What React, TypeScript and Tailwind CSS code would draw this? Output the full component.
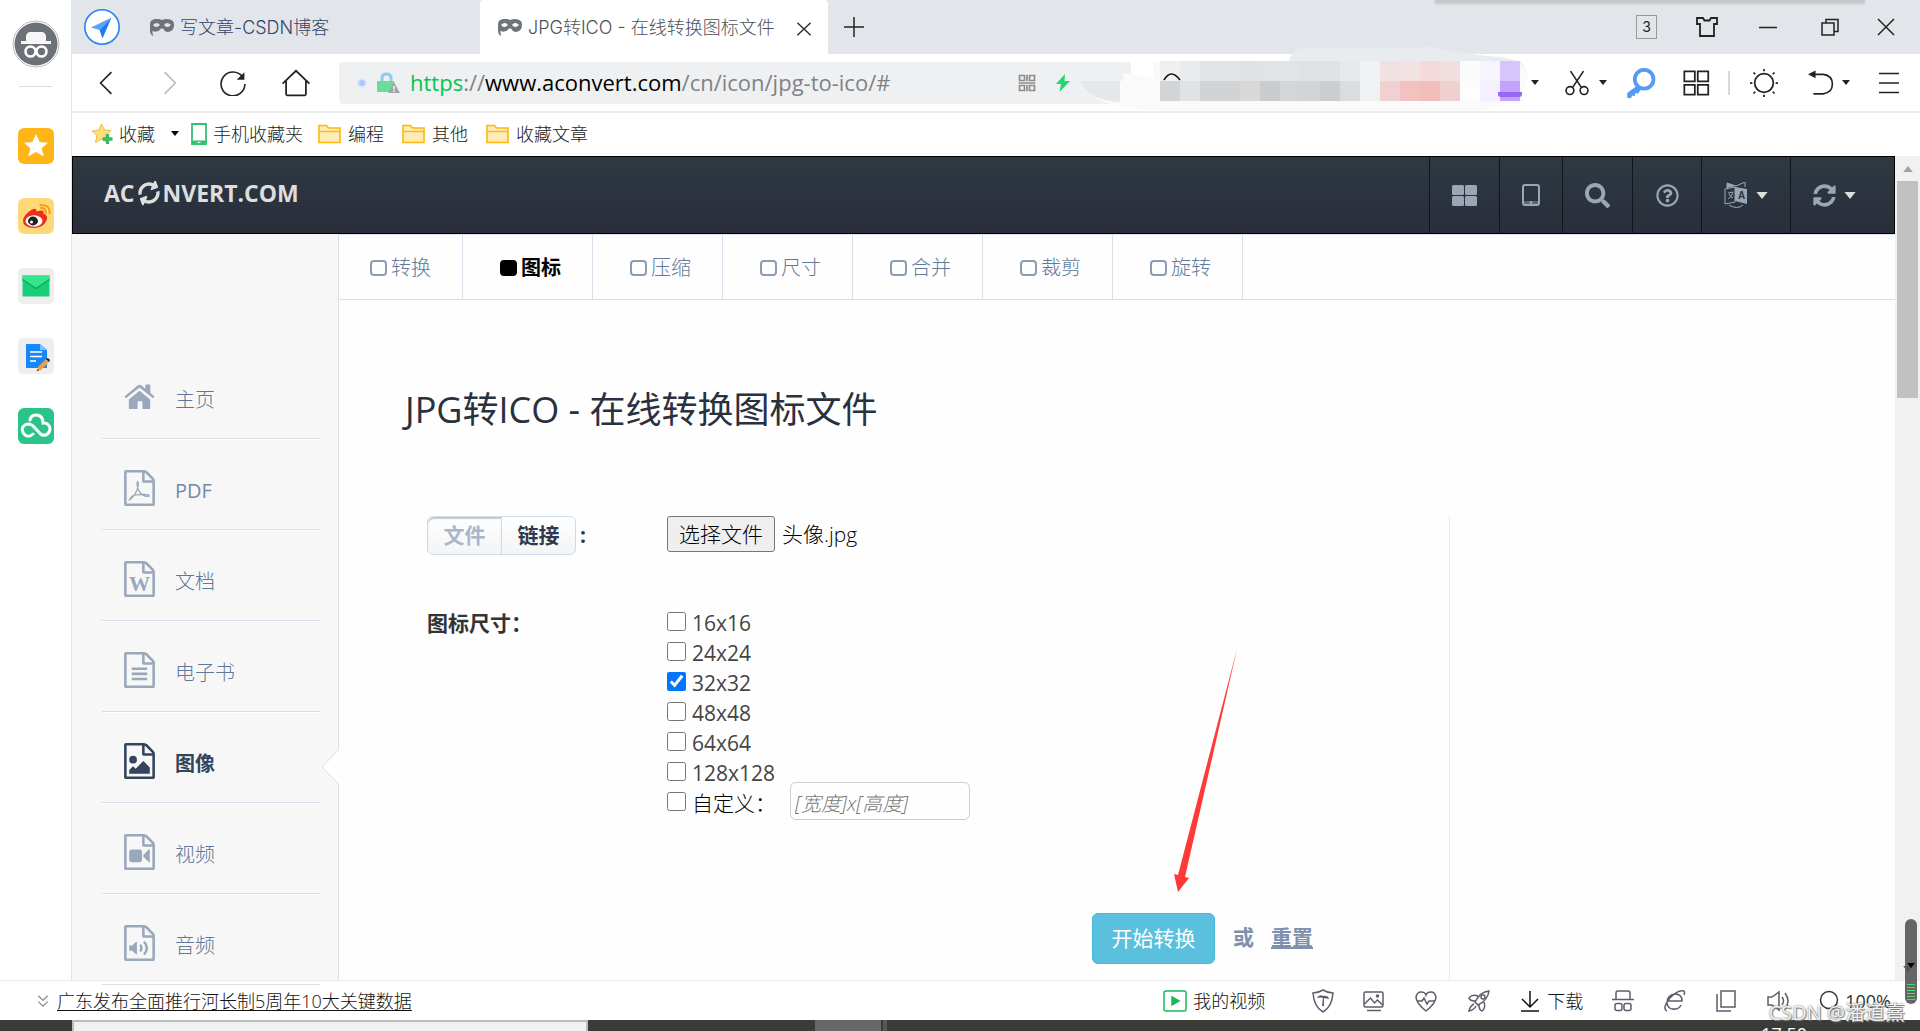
import { ReactNode } from "react";

import { FaRegQuestionCircle, FaSearch, FaSyncAlt } from "react-icons/fa";

import { twMerge } from "tailwind-merge";

interface IIconProps {
  className?: string;
}

interface IStrokeIconProps extends IIconProps {
  children: ReactNode;
  size?: number;
}

function StrokeIcon({ children, className, size = 24 }: IStrokeIconProps) {
  return (
    <svg
      className={twMerge("shrink-0", className)}
      fill="none"
      height={size}
      stroke="currentColor"
      strokeWidth={1.5}
      viewBox="0 0 24 24"
      width={size}
    >
      {children}
    </svg>
  );
}

function Caret({ className }: IIconProps) {
  return (
    <svg
      className={twMerge("h-[5px] w-2 shrink-0", className)}
      fill="currentColor"
      viewBox="0 0 8 5"
    >
      <path d="M0 0h8L4 5z" />
    </svg>
  );
}

function MaskIcon() {
  return (
    <svg className="h-[18px] w-6 shrink-0" fill="#6f737a" viewBox="0 0 24 18">
      <path
        d="M0 5q0-4 5-5 4-.6 7 1 4-1.600 8-.6 4 1 4 5 0 7-6 7.500-3 0-5-3.500h-2q-2 3-5 3.200-2 .3-3.400-.8-.6 2 .8 5.200Q0 16 0 11zM3 6q3 4 7 0-3-4-7 0zm11 0q3 4 7 0-4-4-7 0z"
        fillRule="evenodd"
      />
    </svg>
  );
}

function FolderIcon() {
  return (
    <svg className="h-5 w-[23px] shrink-0" viewBox="0 0 23 20">
      <path
        d="M1 18.500V1.500h7.500l2 2.500H22v14.500z"
        fill="#ffebb5"
        stroke="#fcb90f"
        strokeWidth="1.600"
      />
      <path d="M1 7.500h21" stroke="#fcb90f" strokeWidth="1.400" />
    </svg>
  );
}

function HomeGlyph() {
  return (
    <svg className="h-[26px] w-8" fill="currentColor" viewBox="0 0 32 26">
      <path d="M16 6.500 27 15.500V24.500q0 1-1 1h-7v-8h-5v8H6q-1 0-1-1v-9z" />
      <path d="M14 1q2-1.500 4 0l4 3.400V1q0-.8.800-.8h3.600q.8 0 .8.800v7.600L31.500 12.500 30 14.400 16 3.200 2 14.400.500 12.500z" />
    </svg>
  );
}

function FileGlyph({ children }: { children: ReactNode }) {
  return (
    <svg
      className="h-9 w-[31px]"
      fill="currentColor"
      viewBox="0 0 1536 1792"
    >
      <path d="M1468 380q28 28 48 76t20 88v1152q0 40-28 68t-68 28H96q-40 0-68-28t-28-68V96q0-40 28-68T96 0h896q40 0 88 20t76 48zm-444-244v376h376q-10-29-22-41l-313-313q-12-12-41-22zm384 1528V640H992q-40 0-68-28t-28-68V128H128v1536z" />
      {children}
    </svg>
  );
}

const sideItems = [
  { label: "主页", icon: <HomeGlyph /> },
  {
    label: "PDF",
    icon: (
      <FileGlyph>
        <path
          d="M270 1490q40-140 250-240 150-270 190-500 0-180-40-170-70 60 20 340 90 250 240 330 200 100 310 50 40-60-130-80-300-10-590 30-180 190-250 240z"
          fill="none"
          stroke="currentColor"
          strokeWidth="62"
        />
      </FileGlyph>
    ),
  },
  {
    label: "文档",
    icon: (
      <FileGlyph>
        <text
          fontFamily="Liberation Serif, serif"
          fontSize="1050"
          fontWeight="700"
          textAnchor="middle"
          x="768"
          y="1480"
        >
          W
        </text>
      </FileGlyph>
    ),
  },
  {
    label: "电子书",
    icon: (
      <FileGlyph>
        <path d="M384 768h768v128H384zM384 1024h768v128H384zM384 1280h768v128H384z" />
      </FileGlyph>
    ),
  },
  {
    active: true,
    label: "图像",
    icon: (
      <FileGlyph>
        <path d="M1280 1216v320H256v-192l192-192 128 128 384-384z" />
        <circle cx="448" cy="832" r="192" />
      </FileGlyph>
    ),
  },
  {
    label: "视频",
    icon: (
      <FileGlyph>
        <path d="M768 768q52 0 90 38t38 90v384q0 52-38 90t-90 38H384q-52 0-90-38t-38-90V896q0-52 38-90t90-38zM1280 800v576q0 22-20 30-20 6-35-7l-265-266v-90l265-266q15-13 35-7 20 8 20 30z" />
      </FileGlyph>
    ),
  },
  {
    label: "音频",
    icon: (
      <FileGlyph>
        <path d="M640 864v576q0 40-50 20l-180-176H256v-264h154l180-176q50-20 50 20z" />
        <path
          d="M800 980q130 170 0 340M990 830q290 320 0 640"
          fill="none"
          stroke="currentColor"
          strokeWidth="120"
        />
      </FileGlyph>
    ),
  },
];

const tools = ["转换", "图标", "压缩", "尺寸", "合并", "裁剪", "旋转"];

const sizes = ["16x16", "24x24", "32x32", "48x48", "64x64", "128x128"];

// One row of swatches per line of the blurred search box
const mosaic = [
  [
    "#eff0f2", "#e9ebed", "#e2e3e5", "#e2e3e5", "#e1e2e4", "#e2e3e4",
    "#e2e3e5", "#e0e1e3", "#e1e2e4", "#e7e8ea", "#f0f2f5", "#f2e1e2",
    "#f2e3e3", "#f4dadb", "#f2dedf", "#fbfbfc", "#f6f4fe", "#d6c4fd",
  ],
  [
    "#d3d4d6", "#e1e2e4", "#d2d3d5", "#d2d3d5", "#d8d8d9", "#cbcccf",
    "#d4d5d7", "#d3d4d6", "#cccdcf", "#dadce0", "#eff1f4", "#f0d0d0",
    "#f3c1bf", "#f3bdbb", "#f0d0cf", "#fdfdfd", "#f4f0ff", "#c1a3fb",
  ],
];

function AppRail() {
  return (
    <aside className="flex w-[72px] shrink-0 flex-col items-center border-r border-[#e1e2e4] bg-white pt-5">
      <button aria-label="账号" className="size-12">
        <svg viewBox="0 0 48 48">
          <circle cx="24" cy="24" fill="#fff" r="23" stroke="#b9bbbf" />
          <circle cx="24" cy="24" fill="#6c7178" r="21.500" />
          <path
            d="M14 21v-5q1-4 4-4h12q3 0 4 4v5h5v3H9v-3z"
            fill="#f6f6f6"
          />
          <g fill="none" stroke="#fff" strokeWidth="2.600">
            <circle cx="18.500" cy="31.500" r="5" />
            <circle cx="29.500" cy="31.500" r="5" />
          </g>
        </svg>
      </button>
      <hr className="mt-[18px] w-[33px] border-[#dcdde0]" />
      <nav className="mt-[41px] flex flex-col gap-[34px]">
        <button aria-label="收藏" className="size-9">
          <svg viewBox="0 0 36 36">
            <rect fill="#ffb516" height="36" rx="6" width="36" />
            <path
              d="m18 6 3.700 8 8.300.700-6.400 5.600 2.200 8.200L18 24l-7.800 4.500 2.200-8.200L6 14.700l8.300-.7z"
              fill="#fff"
            />
          </svg>
        </button>
        <button aria-label="微博" className="size-9">
          <svg viewBox="0 0 36 36">
            <rect fill="#ffd878" height="36" rx="6" width="36" />
            <path
              d="M5 23q0-6 9-11.500 5-2 4.500 2 8-3 7 2 5 2 3 7-3 7-12 7.500Q5 29.500 5 23z"
              fill="#e8301c"
            />
            <ellipse cx="16" cy="23" fill="#fff" rx="8.500" ry="5.800" />
            <ellipse cx="15" cy="23" fill="#222" rx="5" ry="4.400" />
            <circle cx="13.500" cy="24" fill="#fff" r="1.500" />
            <path
              d="M22 10q6-1 6 6M21.500 7q11-1 10 9"
              fill="none"
              stroke="#f6a01c"
              strokeWidth="2"
            />
          </svg>
        </button>
        <button aria-label="邮箱" className="size-9">
          <svg viewBox="0 0 36 36">
            <rect fill="#eee" height="36" rx="5" width="36" />
            <path d="M4.500 7.500h27v21h-27z" fill="#17cf78" />
            <path d="M4.500 7.500h27V12L18 20.500 4.500 12z" fill="#35e58b" />
            <path
              d="M4.500 11.500 18 20.500l13.500-9"
              fill="none"
              stroke="#0da45c"
              strokeWidth="1.200"
            />
          </svg>
        </button>
        <button aria-label="笔记" className="size-9">
          <svg viewBox="0 0 36 36">
            <rect fill="#eee" height="36" rx="5" width="36" />
            <path d="M8 6h14l7 6v18H8z" fill="#1687fb" />
            <path d="M22 6v6h7z" fill="#7cc0ff" />
            <path
              d="M12 14h12M12 18.500h12M12 23h6"
              stroke="#fff"
              strokeWidth="1.400"
            />
            <path d="m19 33 1-4 8-8 3 3-8 8z" fill="#f99c3a" />
            <path d="m28 21 2-1 2 2-1 2zM19 33l.5-2 1.500 1.500z" fill="#222" />
          </svg>
        </button>
        <button aria-label="网盘" className="size-9">
          <svg viewBox="0 0 36 36">
            <rect fill="#2ac48a" height="36" rx="6" width="36" />
            <path
              d="M15 26q-5 4.500-9 0-4-6 1-9 5-3 10 3l5 5.500q4 3.500 8 0 4-5 0-9-2-2-5-1.500 0-8-7-8-5 0-6 5"
              fill="none"
              stroke="#fff"
              strokeLinecap="round"
              strokeWidth="3"
            />
          </svg>
        </button>
      </nav>
    </aside>
  );
}

function TabStrip() {
  return (
    <header className="flex h-[54px] items-stretch bg-[#e2e5ea] font-['Inter','Noto_Sans_CJK_SC',sans-serif] text-lg font-light">
      <button aria-label="导航" className="ml-3 self-center">
        <svg className="size-9" viewBox="0 0 36 36">
          <circle cx="18" cy="18" fill="#fff" r="17.200" stroke="#2a80f5" strokeWidth="1.600" />
          <path d="M27.500 8.500 7 18.500l8.500 2.500z" fill="#57a5fb" />
          <path d="M27.500 8.500 15.500 21l3 8.500z" fill="#1d7cf2" />
        </svg>
      </button>
      <a
        className="ml-[30px] flex w-[330px] items-center gap-[6px] pt-[2px] text-[#2f456b]"
        href="#blog"
      >
        <MaskIcon />
        写文章-CSDN博客
      </a>
      <div className="flex w-[348px] items-center gap-[6px] rounded-t bg-white pt-[2px] pr-4 pl-[18px] text-[#4c5058]">
        <MaskIcon />
        <a className="flex-1 whitespace-nowrap" href="#icon">
          JPG转ICO - 在线转换图标文件
        </a>
        <button aria-label="关闭标签" className="text-[#333]">
          <StrokeIcon size={16}>
            <path d="m2 4 20 19M22 4 2 23" strokeWidth="2.200" />
          </StrokeIcon>
        </button>
      </div>
      <button aria-label="新标签" className="ml-[14px] text-[#222]">
        <StrokeIcon>
          <path d="M12 2v20M2 12h20" />
        </StrokeIcon>
      </button>
      <div className="relative flex flex-1 items-center justify-end pr-[22px] text-[#222]">
        <div className="absolute top-0 right-[55px] h-[3px] w-[430px] bg-[#c6c9cc] shadow" />
        <button className="h-6 w-[21px] border border-[#999] text-center text-sm font-normal">
          3
        </button>
        <button aria-label="皮肤" className="ml-[38px]">
          <StrokeIcon>
            <path d="M2 3h6l1.500 2.500h5L16 3h6v6h-3v12H5V9H2z" strokeWidth="1.800" />
          </StrokeIcon>
        </button>
        <button aria-label="最小化" className="ml-[37px]">
          <StrokeIcon>
            <path d="M3 12.500h18" />
          </StrokeIcon>
        </button>
        <button aria-label="还原" className="ml-[38px]">
          <StrokeIcon>
            <path d="M4 8h12v12H4zM8 8V4.500h12v12h-4" />
          </StrokeIcon>
        </button>
        <button aria-label="关闭" className="ml-8">
          <StrokeIcon>
            <path d="m4 4 16 16M20 4 4 20" />
          </StrokeIcon>
        </button>
      </div>
    </header>
  );
}

function SearchBlur() {
  return (
    <svg
      className="absolute -top-[15px] -left-[73px] h-[66px] w-[460px]"
      viewBox="1080 46 460 66"
    >
      <path
        d="M1289 60q4-13 16-13h110q20-3 32 3l40 5q36 2 38 12v16z"
        fill="#e8ecef"
      />
      <path d="M1080 80q8 30 100 30h300q45-6 48-35-3-17-25-15h-280l-60 18-40-6v8z" fill="#fafafb" />
      <path d="M1080 80h40v21q-34-2-40-21z" fill="#e6e7e9" />
      {mosaic.map((row, rowIndex) =>
        row.map((fill, index) => (
          <rect
            fill={fill}
            height="20"
            key={`${rowIndex}-${index}`}
            width="20"
            x={1160 + index * 20}
            y={60 + rowIndex * 20}
          />
        ))
      )}
      <path d="M1164 79q7-12 16 0" fill="none" stroke="#111" strokeWidth="1.500" />
      <path d="M1498 91h24v2q0 3-3 3h-18q-3 0-3-3z" fill="#9a66f8" />
    </svg>
  );
}

function Toolbar() {
  return (
    <div className="flex h-[59px] items-center border-b-2 border-[#ececed] bg-white pr-[19px] text-[#222]">
      <button aria-label="后退" className="ml-[21px]">
        <StrokeIcon size={26}>
          <path d="M17 2 7 12l10 10" />
        </StrokeIcon>
      </button>
      <button aria-label="前进" className="ml-[39px] text-[#bbb]">
        <StrokeIcon size={26}>
          <path d="m6 2 10 10L6 22" />
        </StrokeIcon>
      </button>
      <button aria-label="刷新" className="ml-9">
        <StrokeIcon size={26}>
          <path d="M21 6.500A11 11 0 1 0 23 13" />
          <path d="M22.500 2v7h-7z" fill="currentColor" stroke="none" />
        </StrokeIcon>
      </button>
      <button aria-label="主页" className="ml-9">
        <StrokeIcon size={28}>
          <path d="M.5 12.500 12 1.500l11.500 11M3.500 10v11.500q0 1 1 1h15q1 0 1-1V10" />
        </StrokeIcon>
      </button>
      <div className="ml-[29px] flex h-[42px] min-w-0 flex-1 items-center rounded bg-[#eff0f2] pl-4">
        <span className="ml-[2px] size-[10px] shrink-0 rounded-full border-2 border-[#dbe6fb] bg-[#a9c6fa]" />
        <svg className="ml-[9px] h-[22px] w-6 shrink-0" viewBox="0 0 24 22">
          <path d="M6 9V6q0-4 4.500-4T15 6v3" fill="none" stroke="#8ecbf2" strokeWidth="3" />
          <path d="M1 9h17v11H1z" fill="#67dd95" />
          <path d="m18 10 6 11H12z" fill="#a2a5a6" />
          <path d="M18 14v3.500m0 1v1.500" stroke="#fff" strokeWidth="1.400" />
        </svg>
        <a
          className="ml-[10px] text-[22px] whitespace-nowrap text-[#808285]"
          href="#url"
        >
          <span className="text-[#07c24f]">https</span>://
          <span className="text-black">www.aconvert.com</span>
          /cn/icon/jpg-to-ico/#
        </a>
        <button aria-label="二维码" className="ml-auto text-[#8c8c8c]">
          <StrokeIcon size={20}>
            <path d="M3 3h6v6H3zM15 3h6v6h-6zM3 15h6v6H3zM15 15h6v6h-6zM12 2v8M2 12h20M12 14v8" strokeWidth="2" />
          </StrokeIcon>
        </button>
        <button aria-label="极速模式" className="mr-[60px] ml-[18px]">
          <svg className="h-5 w-4" viewBox="0 0 16 20">
            <path d="M10 1 1 11h5l-1.500 8L15 8h-5.500z" fill="#20d872" />
          </svg>
        </button>
      </div>
      <div className="relative ml-[22px] h-[42px] w-[369px] shrink-0 rounded bg-[#eff0f2]/40">
        <SearchBlur />
      </div>
      <Caret className="ml-[9px]" />
      <button aria-label="截图" className="ml-[25px]">
        <StrokeIcon size={26}>
          <path d="m6 1 10 15M18 1 8 16" />
          <circle cx="5.500" cy="19" r="3.600" />
          <circle cx="18.500" cy="19" r="3.600" />
        </StrokeIcon>
      </button>
      <Caret className="ml-[9px]" />
      <button aria-label="密码" className="ml-[19px] text-[#5699f6]">
        <StrokeIcon size={30}>
          <circle cx="14.500" cy="9" r="7.500" strokeWidth="3" />
          <path d="m9 14-8 6v4h3l1-2 2 .500.500-2.500 2 .500 3-4z" fill="currentColor" stroke="none" />
        </StrokeIcon>
      </button>
      <button aria-label="扩展" className="ml-[26px]">
        <StrokeIcon size={28}>
          <path d="M2 2h9v8.500H2zM13.500 2h9v8.500h-9zM2 13.500h9V22H2zM13.500 13.500h9V22h-9z" />
        </StrokeIcon>
      </button>
      <span className="ml-[18px] h-6 w-[2px] bg-[#d9d9db]" />
      <button aria-label="亮度" className="ml-5">
        <StrokeIcon size={28}>
          <circle cx="12" cy="12" r="8" />
          <path d="M12 0v2M12 22v2M0 12h2M22 12h2M3 3l1.500 1.500M19.500 19.500 21 21M21 3l-1.500 1.500M4.500 19.500 3 21" />
        </StrokeIcon>
      </button>
      <button aria-label="撤销" className="ml-[30px]">
        <StrokeIcon size={26}>
          <path d="M5 4h9q8.500 1 8.500 9T14 22H5" />
          <path d="m0 4 7-3.500v7z" fill="currentColor" stroke="none" />
        </StrokeIcon>
      </button>
      <Caret className="ml-2" />
      <button aria-label="菜单" className="ml-[27px]">
        <StrokeIcon>
          <path d="M2 2.500h20M2 12h20M2 21.500h20" />
        </StrokeIcon>
      </button>
    </div>
  );
}

function BookmarkBar() {
  return (
    <nav className="flex h-[43px] items-center bg-white pb-[2px] pl-[19px] text-lg font-light text-[#222]">
      <a className="flex items-center gap-[6px]" href="#favorites">
        <svg className="size-[22px]" viewBox="0 0 22 22">
          <path
            d="m10.500 1 3 6 6.500.500-5 5 1 7-5.500-3.500-6 3.500 1.500-7L1 8l6.500-.500z"
            fill="#fee07a"
            stroke="#f5b93c"
          />
          <path d="M16.500 11v10M11.500 16h10" stroke="#3fb86c" strokeWidth="3.400" />
        </svg>
        收藏
      </a>
      <Caret className="ml-4 text-black" />
      <a className="ml-3 flex items-center gap-[6px]" href="#mobile">
        <svg className="h-[22px] w-4" viewBox="0 0 16 22">
          <path d="M1 1h14v20H1z" fill="#fff" stroke="#35bf71" strokeWidth="1.800" />
          <path d="M1 17.500h14V21H1z" fill="#35bf71" />
          <path d="M6.500 19.400h3" stroke="#fff" />
        </svg>
        手机收藏夹
      </a>
      <div className="ml-[15px] flex gap-[18px]">
        {["编程", "其他", "收藏文章"].map((label) => (
          <a
            className="flex items-center gap-[7px]"
            href="#folder"
            key={label}
          >
            <FolderIcon />
            {label}
          </a>
        ))}
      </div>
    </nav>
  );
}

function SiteHeader() {
  return (
    <header className="flex h-[78px] items-stretch justify-between border border-black bg-linear-to-b from-[#2e3942] to-[#292e3a] text-[#9ba6b5]">
      <a
        className="ml-[31px] flex items-center pb-1 text-[23px] font-bold text-[#dedede]"
        href="#home"
      >
        AC
        <FaSyncAlt className="mx-[3px] size-[22px] -rotate-[20deg]" />
        NVERT.COM
      </a>
      <nav className="flex">
        <button aria-label="应用" className="flex w-[70px] items-center justify-center border-l border-[#12161b]">
          <svg className="h-[21px] w-[25px]" fill="currentColor" viewBox="0 0 25 21">
            <rect height="10" rx="1.500" width="12" />
            <rect height="10" rx="1.500" width="12" x="13" />
            <rect height="10" rx="1.500" width="12" y="11" />
            <rect height="10" rx="1.500" width="12" x="13" y="11" />
          </svg>
        </button>
        <button aria-label="移动版" className="flex w-[63px] items-center justify-center border-l border-[#12161b]">
          <svg className="h-[22px] w-[18px]" viewBox="0 0 18 22">
            <rect fill="none" height="20" rx="2" stroke="currentColor" strokeWidth="2" width="16" x="1" y="1" />
            <path d="M2 17h14v3H2z" fill="currentColor" opacity=".45" />
            <circle cx="9" cy="18.500" fill="currentColor" r="1.400" />
          </svg>
        </button>
        <button aria-label="搜索" className="flex w-[70px] items-center justify-center border-l border-[#12161b]">
          <FaSearch size={25} />
        </button>
        <button aria-label="帮助" className="flex w-[69px] items-center justify-center border-l border-[#12161b]">
          <FaRegQuestionCircle size={23} />
        </button>
        <button aria-label="语言" className="flex w-[89px] items-center justify-center gap-2 border-l border-[#12161b]">
          <svg className="h-[26px] w-6" fill="currentColor" viewBox="0 0 24 26">
            <path d="m11 5 12 2v15l-12-3z" />
            <path d="M1 7l10-2v15L1 22zM3 1l9 3 9-4v5M3 1v5M5 23q8 5 14 0" fill="none" stroke="currentColor" />
            <path d="m3 1 9 3-9 2z" />
            <path d="M4 11l5-1q-1 5-5 7M5 12q2 4 4 4" fill="none" stroke="currentColor" />
            <text fill="#2b333d" fontFamily="Liberation Sans, sans-serif" fontSize="10" fontWeight="700" x="14" y="17">
              A
            </text>
          </svg>
          <Caret className="h-[7px] w-3 text-[#dedede]" />
        </button>
        <button aria-label="转换" className="flex w-[104px] items-center gap-2 border-l border-[#12161b] pl-[22px]">
          <FaSyncAlt size={23} />
          <Caret className="h-[7px] w-3 text-[#dedede]" />
        </button>
      </nav>
    </header>
  );
}

function Sidebar() {
  return (
    <aside className="w-[267px] shrink-0 border-r border-[#d6e1ea] bg-[#f7f7f7] px-[30px] pt-[114px]">
      <ul className="-mr-3">
        {sideItems.map(({ active, icon, label }) => (
          <li
            className="relative h-[91px] border-b border-[#d6e0ea] shadow-[0_1px_0_#fff]"
            key={label}
          >
            <a
              className={twMerge(
                "flex h-full items-center gap-5 pt-2 pl-[22px] text-xl font-light text-[#5f7798]",
                active && "font-bold text-[#32455c]",
                label === "PDF" && "font-normal text-[#7489a6]"
              )}
              href="#section"
            >
              <span
                className={twMerge(
                  "flex w-[31px] justify-center text-[#9aa8bb]",
                  active && "text-[#32455c]"
                )}
              >
                {icon}
              </span>
              <span className="pt-[6px]">{label}</span>
            </a>
            {active && (
              <svg
                className="absolute top-[38px] -right-[19px] h-[34px] w-[18px]"
                viewBox="0 0 18 34"
              >
                <path d="M18 0 1 17l17 17z" fill="#fff" />
                <path d="M17 .5 1 17l16 16.500" fill="none" stroke="#d6e1ea" />
              </svg>
            )}
          </li>
        ))}
      </ul>
    </aside>
  );
}

function ToolTabs() {
  return (
    <nav className="flex h-[65px] border-b border-[#d6dfea]">
      {tools.map((tool) => {
        const isActive = tool === "图标";

        return (
          <a
            className={twMerge(
              "flex items-center gap-1 border-r border-[#d6dfea] pt-[2px] pr-[31px] pl-[37px] text-xl font-light text-[#617a9a] first:pl-[31px]",
              isActive && "font-bold text-black"
            )}
            href="#tool"
            key={tool}
          >
            <span
              className={twMerge(
                "h-4 w-[17px] rounded-[4px] border-2 border-[#8a9db5]",
                isActive && "border-black bg-black"
              )}
            />
            {tool}
          </a>
        );
      })}
    </nav>
  );
}

function ConvertForm() {
  return (
    <form
      className="relative ml-[88px] w-full max-w-[1023px] flex-1 border-r border-[#ebebeb] text-[21px] text-[#444]"
      onSubmit={(event) => event.preventDefault()}
    >
      <div className="flex h-[38px] items-start">
        <div className="flex w-60 items-center font-bold text-[#333]">
          <div className="flex h-[39px] rounded-md border border-[#cbdcea] bg-linear-to-b from-white to-[#f4f4f4]">
            <button
              className="w-[74px] rounded-l-md border-r border-[#cbdcea] text-[#a9b6c9] shadow-[inset_0_2px_1px_#c8c8c8]"
              type="button"
            >
              文件
            </button>
            <button className="w-[73px] text-[#2e3a4c]" type="button">
              链接
            </button>
          </div>
          <span className="ml-1">:</span>
        </div>
        <label
          className="flex h-9 w-[108px] items-center justify-center rounded-[3px] border border-[#767676] bg-[#efefef] pt-[2px] font-light text-black"
          htmlFor="file"
        >
          选择文件
        </label>
        <input className="sr-only" id="file" type="file" />
        <span className="ml-[7px] pt-[3px] font-light text-black">
          头像.jpg
        </span>
      </div>

      <fieldset className="mt-[52px] flex">
        <legend className="float-left w-60 leading-[34px] font-bold text-[#333]">
          图标尺寸：
        </legend>
        <div className="flex flex-col">
          {sizes.map((size) => (
            <label className="flex h-[30px] items-center gap-[6px]" key={size}>
              <input
                className="size-[19px] accent-[#0075ff]"
                defaultChecked={size === "32x32"}
                type="checkbox"
              />
              <span className="pt-[6px]">{size}</span>
            </label>
          ))}
          <div className="flex h-[30px] items-center">
            <label className="flex w-[123px] items-center gap-[6px]">
              <input className="size-[19px]" type="checkbox" />
              <span className="pt-[6px] font-light text-black">自定义：</span>
            </label>
            <input
              aria-label="自定义尺寸"
              className="h-[38px] w-[180px] rounded-md border border-[#ccc] px-1 pt-1 text-xl placeholder:font-light placeholder:text-[#777] placeholder:italic"
              placeholder="[宽度]x[高度]"
            />
          </div>
        </div>
      </fieldset>

      <div className="mt-[97px] flex h-[51px] items-center justify-end pr-[136px] font-bold text-[#7d90ae]">
        <button
          className="h-[51px] w-[123px] rounded-md border border-[#46b8da] bg-[#5bc0de] font-normal text-white"
          type="submit"
        >
          开始转换
        </button>
        <span className="ml-[18px] pb-[2px]">或</span>
        <button className="ml-[17px] pb-[2px] underline" type="reset">
          重置
        </button>
      </div>

      <svg
        className="absolute top-[133px] left-[747px] h-[244px] w-16"
        viewBox="0 0 64 244"
      >
        <path d="M63 0 4 226l-4-1 4 18 11-14-4-1z" fill="#ff3a36" />
      </svg>
    </form>
  );
}

function PageScrollbar() {
  return (
    <div className="relative flex w-[25px] shrink-0 flex-col items-center bg-[#f1f1f1] pt-[10px]">
      <Caret className="h-[6px] w-3 rotate-180 text-[#a3a3a3]" />
      <div className="mt-[9px] h-[217px] w-[21px] bg-[#c1c1c1]" />
      <Caret className="mt-auto mb-2 h-[6px] w-3 text-[#505050]" />
      <div className="absolute right-[3px] -bottom-6 z-10 flex h-[85px] w-3 flex-col justify-end gap-[2px] rounded-md bg-[#555]/90 px-[2px] pb-1">
        <Caret className="mb-[14px] text-black" />
        <span className="h-px bg-[#4bd865]" />
        <span className="h-px bg-[#4bd865]" />
        <span className="h-px bg-[#4bd865]" />
        <span className="h-px bg-[#4bd865]" />
        <span className="h-px bg-[#4bd865]" />
        <span className="h-px bg-[#4bd865]" />
      </div>
    </div>
  );
}

function StatusBar() {
  return (
    <footer className="flex h-10 shrink-0 items-center border-t border-[#e8e8e8] bg-white pr-[29px] pl-9 text-lg font-light text-[#111]">
      <StrokeIcon className="text-[#888]" size={14}>
        <path d="m4 3 8 8 8-8M4 13l8 8 8-8" strokeWidth="2" />
      </StrokeIcon>
      <a className="ml-[7px] underline underline-offset-2" href="#news">
        广东发布全面推行河长制5周年10大关键数据
      </a>
      <div className="ml-auto flex items-center gap-7 text-[#5c5f66]">
        <button className="mr-[18px] flex items-center gap-[6px] text-[#111]">
          <StrokeIcon className="text-[#16b956]">
            <rect height="20" rx="2" width="22" x="1" y="2" />
            <path d="m9 8 7 4-7 4z" fill="currentColor" />
          </StrokeIcon>
          我的视频
        </button>
        <StrokeIcon>
          <path d="M12 1q5 3 10 3-1 14-10 19Q3 18 2 4q5 0 10-3z" />
          <path d="M6 9q2-4 6-2 5-1 6 3l-5-1v8h-2l1-8q-2-1-6 0z" fill="currentColor" stroke="none" />
        </StrokeIcon>
        <StrokeIcon>
          <rect height="15" rx="1.500" width="19" x="1" y="3" />
          <path d="m1.500 15 6-6 4 5 3-3 5 5M4 21.500h14" />
          <circle cx="14.500" cy="7" r="1" />
        </StrokeIcon>
        <StrokeIcon>
          <path d="M11 22Q1 14 1 8q1-5 5-5 4 0 5 3 1-3 5-3 4 0 5 5 0 6-10 14z" />
          <path d="M2 12h5l2-3 3 6 2-3h6" />
        </StrokeIcon>
        <StrokeIcon>
          <path d="M22 2q-9 1-14 11l3 3Q21 11 22 2zM8 12q-5 0-6-3 3-4 9-2M12 16q0 5 3 6 4-3 2-9M7 15q-4 2-5 7 5-1 7-5" />
          <circle cx="16" cy="8" r="2" />
        </StrokeIcon>
        <button className="flex items-center gap-1 text-[#111]">
          <StrokeIcon>
            <path d="M11 2v16m-8-8 8 8 8-8M2 22h18" />
          </StrokeIcon>
          下载
        </button>
        <StrokeIcon>
          <path d="M5 10V4q0-2 2-2h10q2 0 2 2v6M1 10.500h22" />
          <rect height="7" rx="2" width="7" x="4" y="14.500" />
          <rect height="7" rx="2" width="7" x="13" y="14.500" />
        </StrokeIcon>
        <StrokeIcon>
          <path d="M4 12h15q0-7-7-7-8 1-8 9 1 7 8 6 4 0 6-4M4 22Q-1 20 6 10 15 0 21 2q1 1 0 4" />
        </StrokeIcon>
        <StrokeIcon>
          <path d="M6 2h14v16H6zM2 5v17h14" />
        </StrokeIcon>
        <StrokeIcon>
          <path d="M1 8v8h4l7 5V3L5 8zM15 8q3 4 0 8M18 4q6 8 0 16" />
        </StrokeIcon>
        <button className="flex items-center gap-[2px] font-normal text-[#333]">
          <StrokeIcon>
            <circle cx="10" cy="11" r="8.500" />
            <path d="m14 19 3 3" />
          </StrokeIcon>
          100%
        </button>
      </div>
    </footer>
  );
}

function Taskbar() {
  return (
    <div className="flex h-[11px] shrink-0 overflow-hidden bg-[#3b3b37]">
      <div className="ml-[72px] w-[516px] border-2 border-b-0 border-[#bdbdbd] bg-[#f1f1f1]" />
      <div className="ml-[227px] w-[66px] bg-[#686868]" />
      <div className="ml-[2px] w-1 bg-[#575757]" />
      <span className="mr-[113px] ml-auto pt-[2px] text-lg leading-6 text-white">
        17:50
      </span>
    </div>
  );
}

export default function App() {
  return (
    <div className="relative flex h-screen flex-col overflow-hidden bg-white font-['Open_Sans','Noto_Sans_CJK_SC',sans-serif]">
      <div className="flex min-h-0 flex-1">
        <AppRail />
        <div className="flex min-w-0 flex-1 flex-col">
          <TabStrip />
          <Toolbar />
          <BookmarkBar />
          <div className="flex min-h-0 flex-1">
            <div className="flex min-w-0 flex-1 flex-col">
              <SiteHeader />
              <div className="flex min-h-0 flex-1">
                <Sidebar />
                <main className="flex min-w-0 flex-1 flex-col border-t border-[#dfe5ec] bg-[#fefefe]">
                  <ToolTabs />
                  <h1 className="mt-[85px] mb-[81px] pl-[66px] text-4xl leading-[50px] text-[#28313d]">
                    JPG转ICO - 在线转换图标文件
                  </h1>
                  <ConvertForm />
                </main>
              </div>
            </div>
            <PageScrollbar />
          </div>
        </div>
      </div>
      <StatusBar />
      <Taskbar />
      <p className="absolute right-[15px] bottom-[6px] text-xl leading-6 text-white/90 [text-shadow:0_0_2px_#555,1px_1px_1px_#888]">
        CSDN @潘道熹
      </p>
    </div>
  );
}
